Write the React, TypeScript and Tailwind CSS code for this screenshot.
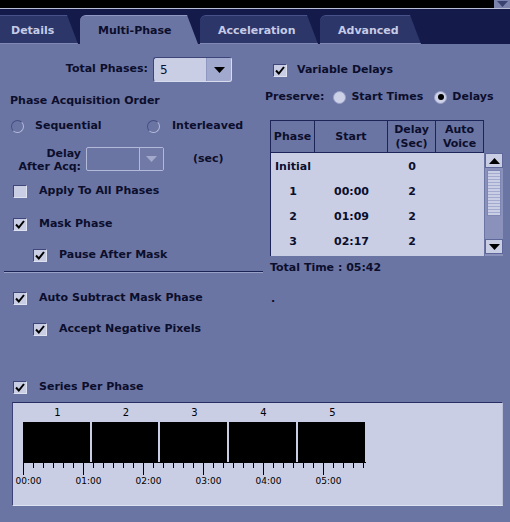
import React from 'react';

const tabs = [
  { label: 'Details', w: 'w-[78px]', pad: 'pl-[11px]', active: false },
  { label: 'Multi-Phase', w: 'w-[118px]', pad: 'pl-[18px]', active: true },
  { label: 'Acceleration', w: 'w-[118px]', pad: 'pl-[18px]', active: false },
  { label: 'Advanced', w: 'w-[101px]', pad: 'pl-[18px]', active: false },
];

const rows = [
  { phase: 'Initial', start: '', delay: '0' },
  { phase: '1', start: '00:00', delay: '2' },
  { phase: '2', start: '01:09', delay: '2' },
  { phase: '3', start: '02:17', delay: '2' },
];

// timeline: 1px per second, origin at x=10 inside the panel
const blocks = [
  [10, 77],
  [79, 145],
  [147, 214],
  [216, 283],
  [285, 352],
];

function Tri({ color, up }: { color: string; up?: boolean }) {
  return (
    <svg width="11" height="6" viewBox="0 0 11 6">
      <path d={up ? 'M0 6H11L5.5 0Z' : 'M0 0H11L5.5 6Z'} fill={color} />
    </svg>
  );
}

function Check({ checked }: { checked?: boolean }) {
  return (
    <span className="flex h-[13px] w-[14px] shrink-0 items-center justify-center border border-t-[#3e467a] border-l-[#3e467a] border-b-[#dfe2f1] border-r-[#dfe2f1] bg-[#c9cee5]">
      {checked && (
        <svg width="10" height="9" viewBox="0 0 10 9">
          <path d="M1 4.5L3.8 7.5L9 1" fill="none" stroke="#000" strokeWidth="2" />
        </svg>
      )}
    </span>
  );
}

function Radio({ on, hollow }: { on?: boolean; hollow?: boolean }) {
  return (
    <span
      className={`flex h-[13px] w-[13px] shrink-0 items-center justify-center rounded-full border ${
        hollow
          ? 'border-t-[#454d82] border-l-[#454d82] border-b-[#b7bcda] border-r-[#b7bcda]'
          : 'border-[#9aa1c8] bg-[#cdd1e7]'
      }`}
    >
      {on && <span className="h-[6px] w-[6px] rounded-full bg-black" />}
    </span>
  );
}

function CheckRow({ label, checked, indent, className = '' }: { label: string; checked?: boolean; indent?: boolean; className?: string }) {
  return (
    <div className={`flex h-[24px] items-center ${indent ? 'pl-[33px]' : 'pl-[13px]'} ${className}`}>
      <Check checked={checked} />
      <span className="ml-[12px] pt-px">{label}</span>
    </div>
  );
}

export default function App() {
  return (
    <div className="h-[522px] w-[510px] overflow-hidden bg-[#6b75a3] font-['DejaVu_Sans',sans-serif] text-[11px] font-bold text-[#0b0e2c]">
      <div className="flex h-[8px] justify-end bg-black">
        <div className="flex w-[16px] items-center justify-center bg-[#7b83ac]">
          <Tri color="#3a4272" />
        </div>
      </div>
      <div className="h-px bg-[#b9bed6]" />

      <div className="flex h-[35px] items-end gap-[2px] bg-[#141b4b]">
        {tabs.map((t) => (
          <div
            key={t.label}
            className={`flex h-[29px] items-center pt-[3px] ${t.w} ${t.pad} ${t.label === 'Details' ? '' : 'rounded-tl-[6px]'} [clip-path:polygon(0_0,calc(100%_-_11px)_0,100%_100%,0_100%)] ${
              t.active
                ? 'border-t border-[#8f98c3] bg-[#6b75a3] text-[#0b0e2c]'
                : 'border-t border-b border-t-[#47518a] border-b-[#8088b3] bg-[#2c3669] text-[#c6cbe6]'
            }`}
          >
            {t.label}
          </div>
        ))}
      </div>

      <div className="grid grid-cols-[265px_1fr]">
        {/* left column */}
        <div className="flex flex-col">
          <div className="mt-[13px] flex h-[25px] items-center">
            <span className="w-[148px] text-right">Total Phases:</span>
            <div className="ml-[5px] flex h-[25px] w-[79px] overflow-hidden rounded-[3px] border border-t-[#3c4478] border-l-[#3c4478] border-b-[#d9dcee] border-r-[#d9dcee] bg-[#c9cee5]">
              <span className="flex flex-1 items-center pl-[6px] text-[12px] font-normal">5</span>
              <span className="flex w-[25px] items-center justify-center border-l border-[#8f96bf] bg-[#a2a9ce]">
                <Tri color="#000" />
              </span>
            </div>
          </div>
          <div className="mt-[7px] flex h-[24px] items-center pl-[10px]">Phase Acquisition Order</div>
          <div className="mt-px flex h-[24px] items-center">
            <div className="flex w-[147px] items-center pl-[11px]">
              <Radio hollow />
              <span className="ml-[11px] pt-px">Sequential</span>
            </div>
            <Radio hollow />
            <span className="ml-[12px] pt-px">Interleaved</span>
          </div>
          <div className="mt-[9px] flex h-[24px] items-center">
            <span className="w-[81px] pt-px text-right leading-[13px]">
              Delay
              <br />
              After Acq:
            </span>
            <div className="ml-[5px] flex h-[24px] w-[78px] rounded-[2px] border border-[#b3b9d8]">
              <span className="flex-1" />
              <span className="flex w-[24px] items-center justify-center border-l border-[#b3b9d8] bg-[#717aa7]">
                <Tri color="#a3a9cb" />
              </span>
            </div>
            <span className="ml-[29px]">(sec)</span>
          </div>
          <CheckRow label="Apply To All Phases" className="mt-[8px]" />
          <CheckRow label="Mask Phase" checked className="mt-[9px]" />
          <CheckRow label="Pause After Mask" checked indent className="mt-[7px]" />
          <div className="ml-[4px] mt-[4px] h-[2px] w-[259px] border-t border-b border-t-[#1b2256] border-b-[#9aa1c6]" />
        </div>

        {/* right column */}
        <div className="flex flex-col">
          <div className="mt-[14px] flex h-[24px] items-center pl-[8px]">
            <Check checked />
            <span className="ml-[10px] pt-px">Variable Delays</span>
          </div>
          <div className="mt-[3px] flex h-[24px] items-center">
            <span>Preserve:</span>
            <span className="ml-[9px]">
              <Radio />
            </span>
            <span className="ml-[5px]">Start Times</span>
            <span className="ml-[11px]">
              <Radio on />
            </span>
            <span className="ml-[5px]">Delays</span>
          </div>

          <div className="ml-[5px] mt-[11px] w-[233px]">
            <div className="grid h-[33px] w-[214px] grid-cols-[44px_73px_48px_1fr] border-t border-l border-[#1c2458] text-center leading-[14px]">
              {[['Phase'], ['Start'], ['Delay', '(Sec)'], ['Auto', 'Voice']].map((h) => (
                <div key={h[0]} className="flex flex-col items-center justify-center border-r border-b border-[#1c2458]">
                  {h.map((l) => (
                    <span key={l}>{l}</span>
                  ))}
                </div>
              ))}
            </div>
            <div className="flex h-[103px]">
              <div className="w-[214px] border-l border-[#1c2458] bg-[#c9cee5] pt-px">
                {rows.map((r) => (
                  <div key={r.phase} className="grid h-[25px] grid-cols-[44px_73px_48px_1fr] items-center pt-px text-center">
                    <span>{r.phase}</span>
                    <span>{r.start}</span>
                    <span>{r.delay}</span>
                    <span />
                  </div>
                ))}
              </div>
              <div className="ml-px flex w-[18px] flex-col bg-[#8a92bc]">
                <div className="flex h-[15px] items-center justify-center border border-[#5e679a] bg-[#c9cee5]">
                  <Tri color="#000" up />
                </div>
                <div className="mx-[2px] my-[2px] h-[46px] border border-[#7e86b4] bg-[repeating-linear-gradient(to_bottom,#c9cee5_0px,#c9cee5_2px,#a3aad0_2px,#a3aad0_3px)]" />
                <div className="flex-1" />
                <div className="mb-[2px] flex h-[15px] items-center justify-center border border-[#5e679a] bg-[#c9cee5]">
                  <Tri color="#000" />
                </div>
              </div>
            </div>
          </div>
          <div className="ml-[5px] mt-[2px] flex h-[20px] items-center">Total Time : 05:42</div>
        </div>
      </div>

      <div className="mt-[8px] grid h-[24px] grid-cols-[265px_1fr] items-center">
        <CheckRow label="Auto Subtract Mask Phase" checked />
        <span className="pl-[6px] pt-[3px]">.</span>
      </div>
      <CheckRow label="Accept Negative Pixels" checked indent className="mt-[7px]" />
      <CheckRow label="Series Per Phase" checked className="mt-[34px]" />

      <div className="ml-[12px] mt-[3px] h-[104px] w-[491px] border border-t-[#262e63] border-l-[#3a4278] border-b-[#dfe2f1] border-r-[#b8bdd9] bg-[#c9cee5]">
        <svg width="489" height="102" viewBox="0 0 489 102" fontFamily="DejaVu Sans" fontWeight="normal">
          {blocks.map(([a, b], i) => (
            <g key={i}>
              <text x={(a + b) / 2 + 1} y={13} fontSize="10" textAnchor="middle" fill="#000">
                {i + 1}
              </text>
              <rect x={a} y={19} width={b - a} height={40} fill="#000" />
            </g>
          ))}
          <line x1={10} y1={59.5} x2={353} y2={59.5} stroke="#000" />
          {Array.from({ length: 35 }, (_, k) => {
            const x = 10 + k * 10 + 0.5;
            const major = k % 6 === 0;
            return <line key={k} x1={x} y1={59} x2={x} y2={major ? 72 : 65} stroke="#000" />;
          })}
          {['00:00', '01:00', '02:00', '03:00', '04:00', '05:00'].map((l, i) => (
            <text key={l} x={10 + i * 60 + 5.5} y={81} fontSize="9" textAnchor="middle" fill="#000">
              {l}
            </text>
          ))}
        </svg>
      </div>
    </div>
  );
}
